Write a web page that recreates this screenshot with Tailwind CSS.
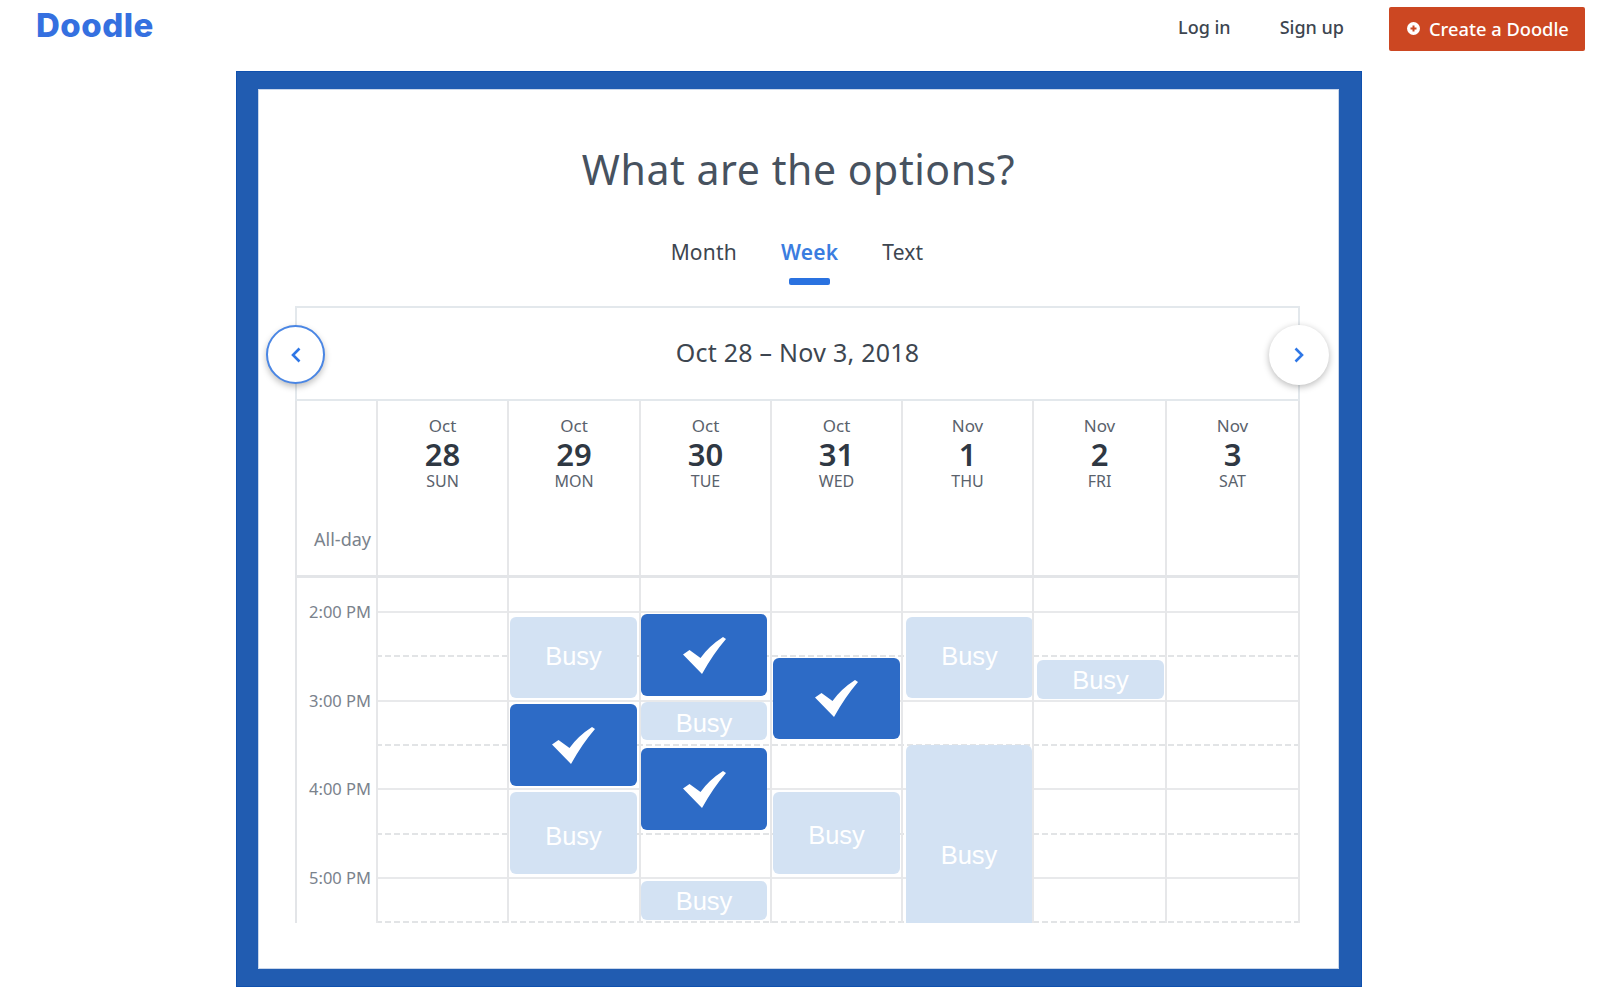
<!DOCTYPE html>
<html lang="en">
<head>
  <meta charset="UTF-8" />
  <title>Doodle</title>
  <script src="https://cdn.jsdelivr.net/npm/@tailwindcss/browser@4"></script>
</head>
<body class="bg-white font-['Noto_Sans',sans-serif] text-[#3d4650]">
  <!-- top bar -->
  <header class="flex h-[71px] items-start pl-[36px] pr-[15px]">
    <a class="mt-[3px] font-['Inter',sans-serif] text-[33px] leading-[44px] font-extrabold tracking-[0.5px] text-[#3570e0]">Doodle</a>
    <nav class="ml-auto flex items-start pt-[7px]">
      <a class="text-[18px] leading-[40px] font-medium">Log in</a>
      <a class="ml-[49px] text-[18px] leading-[40px] font-medium">Sign up</a>
      <button class="ml-[45px] flex h-[44px] w-[196px] items-center rounded-[2px] bg-[#cc4722] pb-[1px] pl-[18px] text-[18.3px] font-medium text-white">
        <svg class="mr-[9px] h-[13px] w-[13px]" viewBox="0 0 13 13"><circle cx="6.5" cy="6.5" r="6.5" fill="#fff"/><path d="M6.5 3.5v6M3.5 6.5h6" stroke="#cc4722" stroke-width="2"/></svg>
        Create a Doodle
      </button>
    </nav>
  </header>

  <!-- blue frame -->
  <main class="ml-[236px] w-[1126px] border border-[#0f50ae] bg-[#215cb1] pt-[17px] pr-[22px] pb-[17px] pl-[21px]">
    <div class="h-[880px] bg-white pt-[55px] shadow-[inset_0_0_0_1px_#c9d6ea]">
      <h1 class="text-center text-[41px] leading-[50px] font-normal tracking-[0.55px] text-[#47525f]">What are the options?</h1>

      <div class="mt-[46px] flex justify-center gap-[44px] pr-[3px] text-[21px] leading-[24px] tracking-[0.2px]">
        <span>Month</span>
        <span class="relative font-semibold text-[#3b7de0]">Week
          <i class="absolute top-[38px] left-[8px] h-[7px] w-[41px] rounded-[2px] bg-[#2a72e0]"></i>
        </span>
        <span>Text</span>
      </div>

      <!-- calendar -->
      <section class="relative mt-[42px] ml-[37px] w-[1005px]">
        <div class="relative flex h-[95px] items-center justify-center border-x-2 border-y-2 border-[#e3e8ec] pb-[2px] text-[25px] tracking-[0.25px]">
          Oct 28 – Nov 3, 2018
        </div>
        <button class="absolute top-[19px] left-[-29px] flex h-[59px] w-[59px] items-center justify-center rounded-full border-2 border-[#4a86e4] bg-white shadow-[0_3px_6px_rgba(0,0,0,0.25)]">
          <svg class="h-[16px] w-[12px]" viewBox="0 0 12 16" fill="none" stroke="#2f77e6" stroke-width="2.6"><path d="M9.5 1.5 3 8l6.500 6.500"/></svg>
        </button>
        <button class="absolute top-[19px] right-[-29px] flex h-[60px] w-[60px] items-center justify-center rounded-full bg-white shadow-[0_2px_7px_rgba(0,0,0,0.28)]">
          <svg class="h-[16px] w-[12px]" viewBox="0 0 12 16" fill="none" stroke="#2f77e6" stroke-width="2.6"><path d="M2.500 1.500 9 8l-6.500 6.500"/></svg>
        </button>

        <!-- day headings -->
        <div class="grid h-[177px] grid-cols-[79px_131px_132px_131px_131px_131px_133px_133px] border-x-2 border-b-[3px] border-[#e3e5e8] text-center">
          <div class="pt-[126px] pr-[5px] text-right text-[18px] leading-[24px] text-[#7a828c]">All-day</div>
          <div class="border-l-2 border-[#e6e7e9] pt-[14px]"><p class="text-[17px] leading-[22px] text-[#5a626c]">Oct</p><p class="text-[31px] leading-[34px] font-semibold text-[#2f3843]">28</p><p class="text-[16px] leading-[21px] text-[#5a626c]">SUN</p></div>
          <div class="border-l-2 border-[#e6e7e9] pt-[14px]"><p class="text-[17px] leading-[22px] text-[#5a626c]">Oct</p><p class="text-[31px] leading-[34px] font-semibold text-[#2f3843]">29</p><p class="text-[16px] leading-[21px] text-[#5a626c]">MON</p></div>
          <div class="border-l-2 border-[#e6e7e9] pt-[14px]"><p class="text-[17px] leading-[22px] text-[#5a626c]">Oct</p><p class="text-[31px] leading-[34px] font-semibold text-[#2f3843]">30</p><p class="text-[16px] leading-[21px] text-[#5a626c]">TUE</p></div>
          <div class="border-l-2 border-[#e6e7e9] pt-[14px]"><p class="text-[17px] leading-[22px] text-[#5a626c]">Oct</p><p class="text-[31px] leading-[34px] font-semibold text-[#2f3843]">31</p><p class="text-[16px] leading-[21px] text-[#5a626c]">WED</p></div>
          <div class="border-l-2 border-[#e6e7e9] pt-[14px]"><p class="text-[17px] leading-[22px] text-[#5a626c]">Nov</p><p class="text-[31px] leading-[34px] font-semibold text-[#2f3843]">1</p><p class="text-[16px] leading-[21px] text-[#5a626c]">THU</p></div>
          <div class="border-l-2 border-[#e6e7e9] pt-[14px]"><p class="text-[17px] leading-[22px] text-[#5a626c]">Nov</p><p class="text-[31px] leading-[34px] font-semibold text-[#2f3843]">2</p><p class="text-[16px] leading-[21px] text-[#5a626c]">FRI</p></div>
          <div class="border-l-2 border-[#e6e7e9] pt-[14px]"><p class="text-[17px] leading-[22px] text-[#5a626c]">Nov</p><p class="text-[31px] leading-[34px] font-semibold text-[#2f3843]">3</p><p class="text-[16px] leading-[21px] text-[#5a626c]">SAT</p></div>
        </div>

        <!-- time grid -->
        <div class="relative h-[345px]">
          <!-- hour and half hour lines -->
          <div class="absolute top-[33px] right-0 left-[81px]">
            <div class="h-[44.33px] border-t-2 border-[#e8e9eb]"></div>
            <div class="h-[44.33px]"><i class="block h-[2px] bg-[repeating-linear-gradient(90deg,#e2e4e6_0,#e2e4e6_6px,transparent_6px,transparent_9px)]"></i></div>
            <div class="h-[44.33px] border-t-2 border-[#e8e9eb]"></div>
            <div class="h-[44.33px]"><i class="block h-[2px] bg-[repeating-linear-gradient(90deg,#e2e4e6_0,#e2e4e6_6px,transparent_6px,transparent_9px)]"></i></div>
            <div class="h-[44.33px] border-t-2 border-[#e8e9eb]"></div>
            <div class="h-[44.33px]"><i class="block h-[2px] bg-[repeating-linear-gradient(90deg,#e2e4e6_0,#e2e4e6_6px,transparent_6px,transparent_9px)]"></i></div>
            <div class="h-[44.33px] border-t-2 border-[#e8e9eb]"></div>
            <div class="h-[2px]"><i class="block h-[2px] bg-[repeating-linear-gradient(90deg,#e2e4e6_0,#e2e4e6_6px,transparent_6px,transparent_9px)]"></i></div>
          </div>

          <div class="relative grid h-full grid-cols-[79px_131px_132px_131px_131px_131px_133px_135px] border-l-2 border-[#e3e5e8]">
            <div class="pt-[23px] pr-[5px] text-right text-[16.5px] leading-[22px] text-[#7a828c]">
              <p class="h-[88.67px]">2:00 PM</p>
              <p class="h-[88.67px]">3:00 PM</p>
              <p class="h-[88.67px]">4:00 PM</p>
              <p>5:00 PM</p>
            </div>
            <div class="border-l-2 border-[#e6e7e9]"></div>

            <!-- Mon -->
            <div class="relative border-l-2 border-[#e6e7e9]">
              <div class="absolute top-[39px] left-[1px] flex h-[81px] w-[127px] items-center justify-center rounded-[6px] bg-[#d3e2f3] pb-[2px] font-['Liberation_Sans',sans-serif] text-[25.5px] text-white">Busy</div>
              <div class="absolute top-[126px] left-[1px] flex h-[82px] w-[127px] items-center justify-center rounded-[6px] bg-[#2d6bc6]">
                <svg class="h-[37px] w-[43px]" viewBox="0 0 43 37" fill="#fff"><path d="M0 17.500 6.500 13 17.500 21Q26 9 40 0L43 2Q30 17 19 37Z"/></svg>
              </div>
              <div class="absolute top-[214px] left-[1px] flex h-[82px] w-[127px] items-center justify-center rounded-[6px] bg-[#d3e2f3] pt-[6px] font-['Liberation_Sans',sans-serif] text-[25.5px] text-white">Busy</div>
            </div>

            <!-- Tue -->
            <div class="relative border-l-2 border-[#e6e7e9]">
              <div class="absolute top-[36px] left-0 flex h-[82px] w-[126px] items-center justify-center rounded-[6px] bg-[#2d6bc6]">
                <svg class="h-[37px] w-[43px]" viewBox="0 0 43 37" fill="#fff"><path d="M0 17.500 6.500 13 17.500 21Q26 9 40 0L43 2Q30 17 19 37Z"/></svg>
              </div>
              <div class="absolute top-[124px] left-0 flex h-[38px] w-[126px] items-center justify-center rounded-[6px] bg-[#d3e2f3] pt-[5px] font-['Liberation_Sans',sans-serif] text-[25.5px] text-white">Busy</div>
              <div class="absolute top-[170px] left-0 flex h-[82px] w-[126px] items-center justify-center rounded-[6px] bg-[#2d6bc6]">
                <svg class="h-[37px] w-[43px]" viewBox="0 0 43 37" fill="#fff"><path d="M0 17.500 6.500 13 17.500 21Q26 9 40 0L43 2Q30 17 19 37Z"/></svg>
              </div>
              <div class="absolute top-[303px] left-0 flex h-[39px] w-[126px] items-center justify-center rounded-[6px] bg-[#d3e2f3] pt-[1px] font-['Liberation_Sans',sans-serif] text-[25.5px] text-white">Busy</div>
            </div>

            <!-- Wed -->
            <div class="relative border-l-2 border-[#e6e7e9]">
              <div class="absolute top-[80px] left-[1px] flex h-[81px] w-[127px] items-center justify-center rounded-[6px] bg-[#2d6bc6]">
                <svg class="h-[37px] w-[43px]" viewBox="0 0 43 37" fill="#fff"><path d="M0 17.500 6.500 13 17.500 21Q26 9 40 0L43 2Q30 17 19 37Z"/></svg>
              </div>
              <div class="absolute top-[214px] left-[1px] flex h-[82px] w-[127px] items-center justify-center rounded-[6px] bg-[#d3e2f3] pt-[4px] font-['Liberation_Sans',sans-serif] text-[25.5px] text-white">Busy</div>
            </div>

            <!-- Thu -->
            <div class="relative border-l-2 border-[#e6e7e9]">
              <div class="absolute top-[39px] left-[3px] flex h-[81px] w-[127px] items-center justify-center rounded-[6px] bg-[#d3e2f3] pb-[2px] font-['Liberation_Sans',sans-serif] text-[25.5px] text-white">Busy</div>
              <div class="absolute top-[167px] left-[3px] flex h-[178px] w-[126px] items-center justify-center rounded-t-[6px] bg-[#d3e2f3] pt-[42px] font-['Liberation_Sans',sans-serif] text-[25.5px] text-white">Busy</div>
            </div>

            <!-- Fri -->
            <div class="relative border-l-2 border-[#e6e7e9]">
              <div class="absolute top-[82px] left-[3px] flex h-[39px] w-[127px] items-center justify-center rounded-[6px] bg-[#d3e2f3] pt-[2px] font-['Liberation_Sans',sans-serif] text-[25.5px] text-white">Busy</div>
            </div>

            <!-- Sat -->
            <div class="border-x-2 border-[#e6e7e9]"></div>
          </div>
        </div>
      </section>
    </div>
  </main>
</body>
</html>
